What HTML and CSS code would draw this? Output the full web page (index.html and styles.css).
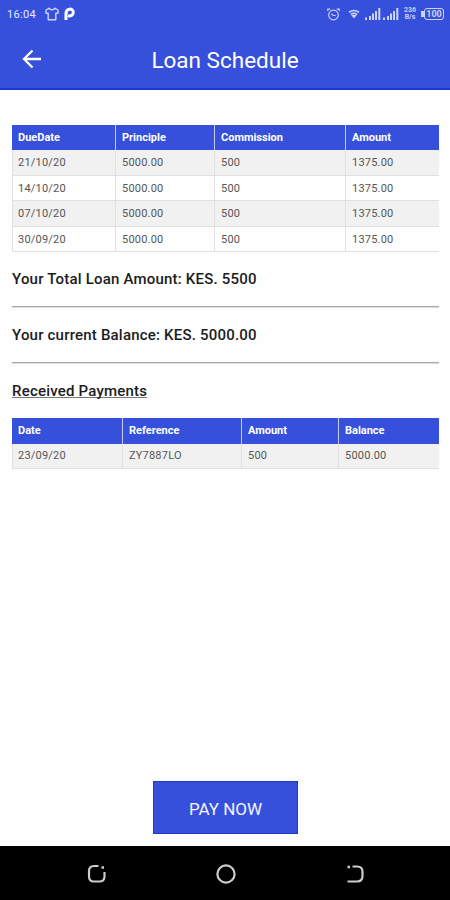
FILE: index.html
```html
<!DOCTYPE html>
<html lang="en">
<head>
    <meta charset="UTF-8">
    <meta name="viewport" content="width=device-width, initial-scale=1.0">
    <title>Loan Schedule</title>
    <link rel="stylesheet" href="styles.css">
</head>
<body>
    <header class="header">
        <div class="status-bar">
            <span class="clock">16:04</span>
            <svg class="icon-shirt" width="14" height="14" viewBox="0 0 14 14" fill="none" stroke="currentColor" stroke-width="1.4" stroke-linejoin="round">
                <path d="M4.3 1.2 1 3v3.2h2.2v6.6h7.6V6.2H13V3L9.7 1.2C9 3.2 5 3.2 4.3 1.2z"/>
            </svg>
            <svg class="icon-p" width="11" height="14" viewBox="0 0 11 14" fill="none" stroke="#fff" stroke-width="3">
                <path d="M2 13V6.500C2 .8 9.300 1 9.300 5.200c0 3.300-2.800 4-5.300 3.600"/>
            </svg>
            <div class="status-right">
                <svg width="13" height="13" viewBox="0 0 13 13" fill="none" stroke="currentColor" stroke-width="1.2">
                    <circle cx="6.500" cy="7" r="4.800"/>
                    <path d="M.8 3V1.200h2.500M12.200 3V1.200H9.700M4.300 5.800l2.200 1.700h2.200"/>
                </svg>
                <svg class="icon-wifi" width="12" height="10" viewBox="0 0 12 10" fill="none" stroke="currentColor" stroke-width="1.700">
                    <path d="M1 3.300q5-3.600 10 0M2.800 5.400q3.200-2.200 6.400 0"/>
                    <path d="M3.200 6h5.600L6 9.500z" fill="currentColor" stroke="none"/>
                </svg>
                <svg class="icon-signal" width="16" height="12" viewBox="0 0 16 12" fill="currentColor">
                    <path d="M0 9.500h2V12H0zM4 8h2v4H4zM7 5.500h2V12H7zM10 3h2v9h-2zM13.300 0h2v12h-2z"/>
                </svg>
                <svg class="icon-signal" width="16" height="12" viewBox="0 0 16 12" fill="currentColor">
                    <path d="M0 9.500h2V12H0zM4 8h2v4H4zM7 5.500h2V12H7zM10 3h2v9h-2zM13.300 0h2v12h-2z"/>
                </svg>
                <span class="speed">236<br>B/s</span>
                <span class="battery"><span>100</span></span>
            </div>
        </div>
        <div class="title-bar">
            <svg class="back" width="20" height="20" viewBox="0 0 20 20" fill="none" stroke="#fff" stroke-width="2.300">
                <path d="M19 10H3M10.500 1.500 2 10l8.500 8.500"/>
            </svg>
            <h1>Loan Schedule</h1>
        </div>
    </header>

    <main class="content">
        <table class="schedule">
            <tr><th class="due">DueDate</th><th class="principle">Principle</th><th class="commission">Commission</th><th>Amount</th></tr>
            <tr><td>21/10/20</td><td>5000.00</td><td>500</td><td>1375.00</td></tr>
            <tr><td>14/10/20</td><td>5000.00</td><td>500</td><td>1375.00</td></tr>
            <tr><td>07/10/20</td><td>5000.00</td><td>500</td><td>1375.00</td></tr>
            <tr><td>30/09/20</td><td>5000.00</td><td>500</td><td>1375.00</td></tr>
        </table>
        <h2 class="total">Your Total Loan Amount: KES. 5500</h2>
        <hr>
        <h2 class="balance">Your current Balance: KES. 5000.00</h2>
        <hr>
        <h2 class="received">Received Payments</h2>
        <table class="payments">
            <tr><th class="date">Date</th><th class="reference">Reference</th><th class="paid">Amount</th><th>Balance</th></tr>
            <tr><td>23/09/20</td><td>ZY7887LO</td><td>500</td><td>5000.00</td></tr>
        </table>
    </main>

    <div class="actions">
        <button>PAY NOW</button>
    </div>

    <nav class="nav-bar">
        <svg width="20" height="20" viewBox="0 0 20 20" fill="none" stroke="currentColor" stroke-width="2.200">
            <path d="M11.500 2H7Q2 2 2 7v5.500q0 5 5 5h5.500q5 0 5-5V8"/>
            <path d="M14.500 3.500h2.500" stroke-width="2.500"/>
        </svg>
        <svg width="20" height="20" viewBox="0 0 20 20" fill="none" stroke="currentColor" stroke-width="2.200">
            <circle cx="10" cy="10" r="8.600"/>
        </svg>
        <svg width="20" height="20" viewBox="0 0 20 20" fill="none" stroke="currentColor" stroke-width="2.200">
            <path d="M7.500 2.500h4.500q5.500 0 5.500 5v4.500q0 5.500-5.500 5.500H2.500"/>
            <path d="M2.500 3h2.500" stroke-width="2.500"/>
        </svg>
    </nav>
</body>
</html>
```
FILE: styles.css
```css
* {
    box-sizing: border-box;
}
body {
    margin: 0;
    height: 900px;
    display: flex;
    flex-direction: column;
    font-family: Roboto, sans-serif;
    background-color: #fefefe;
    color: #1c1c1c;
}
.header {
    height: 90px;
    background-color: #3650dc;
    border-bottom: 2px solid #183bd5;
    color: #fff;
}
.status-bar {
    display: flex;
    align-items: center;
    height: 28px;
    padding: 0 6px 0 7px;
    color: #cbd3fa;
}
.clock {
    width: 30px;
    font-size: 11px;
    letter-spacing: 0.3px;
    color: #e6eaff;
}
.icon-shirt {
    margin-left: 8px;
}
.icon-p {
    margin-left: 5px;
}
.status-right {
    display: flex;
    align-items: center;
    margin-left: auto;
}
.icon-wifi {
    margin-left: 8px;
}
.icon-signal {
    margin-left: 2px;
}
.icon-wifi + .icon-signal {
    margin-left: 5px;
}
.speed {
    width: 14px;
    margin-left: 4px;
    font-size: 7px;
    font-weight: bold;
    line-height: 7px;
    text-align: center;
}
.battery {
    display: flex;
    align-items: center;
    margin-left: 4px;
}
.battery::before {
    content: "";
    width: 3px;
    height: 6px;
    background-color: currentColor;
}
.battery span {
    width: 20px;
    height: 12px;
    border: 1px solid currentColor;
    border-radius: 3px;
    font-size: 9px;
    font-weight: bold;
    line-height: 10px;
    text-align: center;
}
.title-bar {
    display: grid;
    grid-template-columns: 48px 1fr 48px;
    align-items: center;
    height: 62px;
}
.back {
    margin-left: 22px;
}
h1 {
    margin: 0;
    padding-top: 2px;
    font-size: 22.5px;
    font-weight: normal;
    line-height: 60px;
    text-align: center;
}
.content {
    flex: 1;
    padding: 35px 11px 0 12px;
}
table {
    width: 100%;
    table-layout: fixed;
    border-collapse: separate;
    border-spacing: 0;
    font-size: 11px;
}
th, td {
    height: 25.300px;
    padding: 0 6px;
    line-height: 14px;
    text-align: left;
}
th {
    background-color: #3650dc;
    border-left: 1px solid #c3cbf5;
    color: #fff;
}
th:first-child {
    border-left-color: #3650dc;
}
th:first-child, td:first-child {
    padding-left: 5px;
}
td {
    padding-top: 1px;
    border-bottom: 1px solid #e0e0e0;
    border-left: 1px solid #e0e0e0;
    color: #555;
    letter-spacing: 0.2px;
}
.schedule td {
    height: 25.500px;
}
tr:nth-child(even) {
    background-color: #f1f1f1;
}
.due {
    width: 103px;
}
.principle {
    width: 99px;
}
.commission {
    width: 131px;
}
.date {
    width: 110px;
}
.reference {
    width: 119px;
}
.paid {
    width: 97px;
}
h2 {
    margin: 0;
    font-size: 15px;
    font-weight: 500;
    line-height: 18px;
    letter-spacing: 0.2px;
}
.total {
    margin-top: 18px;
}
hr {
    height: 2px;
    margin: 18px 0;
    border: 0;
    border-top: 1px solid #aaa;
    border-bottom: 1px solid #dcdcdc;
}
.received {
    margin-bottom: 18px;
    text-decoration: underline;
    text-decoration-color: #777;
    text-decoration-thickness: 1px;
    text-decoration-skip-ink: none;
}
.actions {
    display: flex;
    justify-content: center;
    margin-bottom: 12px;
}
button {
    width: 145px;
    height: 53px;
    padding: 2px 0 0 1px;
    border: 1px solid #2039d0;
    background-color: #3650dc;
    color: #f3f5ff;
    font-family: inherit;
    font-size: 17px;
}
.nav-bar {
    display: flex;
    justify-content: space-between;
    align-items: center;
    height: 54px;
    padding: 1px 85px 0 87px;
    background-color: #000;
    color: #ccc;
}
```
